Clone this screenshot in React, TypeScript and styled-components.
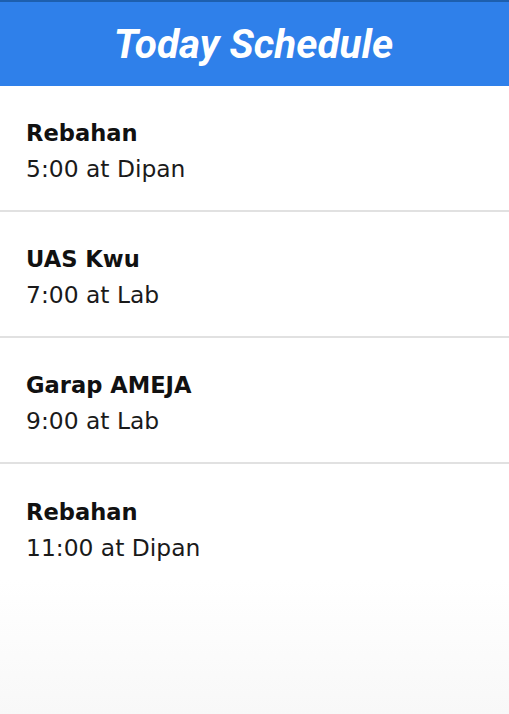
import React from "react";
import styled, { createGlobalStyle } from "styled-components";

const Global = createGlobalStyle`
  html, body { margin: 0; padding: 0; }
  body {
    width: 509px;
    height: 714px;
    overflow: hidden;
    background: linear-gradient(#ffffff 0px, #ffffff 580px, #f8f8f8 714px);
    font-family: "DejaVu Sans", "Liberation Sans", sans-serif;
  }
`;

const Page = styled.div`
  display: flex;
  flex-direction: column;
  width: 509px;
  min-height: 714px;
`;

const Header = styled.header`
  height: 86px;
  box-sizing: border-box;
  border-top: 2px solid #1d5fae;
  background: #2f80ea;
  display: flex;
  align-items: center;
  justify-content: center;
`;

const Title = styled.h1`
  margin: 0;
  font-family: Roboto, "Liberation Sans", sans-serif;
  font-style: italic;
  font-weight: 700;
  font-size: 40.5px;
  color: #ffffff;
  transform: translateX(-1px);
`;

const List = styled.ul`
  list-style: none;
  margin: 0;
  padding: 0;
`;

const Row = styled.li<{ $last?: boolean }>`
  height: 126px;
  box-sizing: border-box;
  padding: 6px 26px 0;
  display: flex;
  flex-direction: column;
  justify-content: center;
  border-bottom: ${(p) => (p.$last ? "none" : "2px solid #e1e1e1")};
`;

const Name = styled.div`
  font-weight: 700;
  font-size: 22.6px;
  line-height: 36px;
  color: #111111;
`;

const When = styled.div`
  font-size: 23.4px;
  line-height: 36px;
  color: #1a1a1a;
`;

const items = [
  { name: "Rebahan", time: "5:00", place: "Dipan" },
  { name: "UAS Kwu", time: "7:00", place: "Lab" },
  { name: "Garap AMEJA", time: "9:00", place: "Lab" },
  { name: "Rebahan", time: "11:00", place: "Dipan" },
];

export default function App() {
  return (
    <Page>
      <Global />
      <Header>
        <Title>Today Schedule</Title>
      </Header>
      <List>
        {items.map((it, i) => (
          <Row key={i} $last={i === items.length - 1}>
            <Name>{it.name}</Name>
            <When>
              {it.time} at {it.place}
            </When>
          </Row>
        ))}
      </List>
    </Page>
  );
}
